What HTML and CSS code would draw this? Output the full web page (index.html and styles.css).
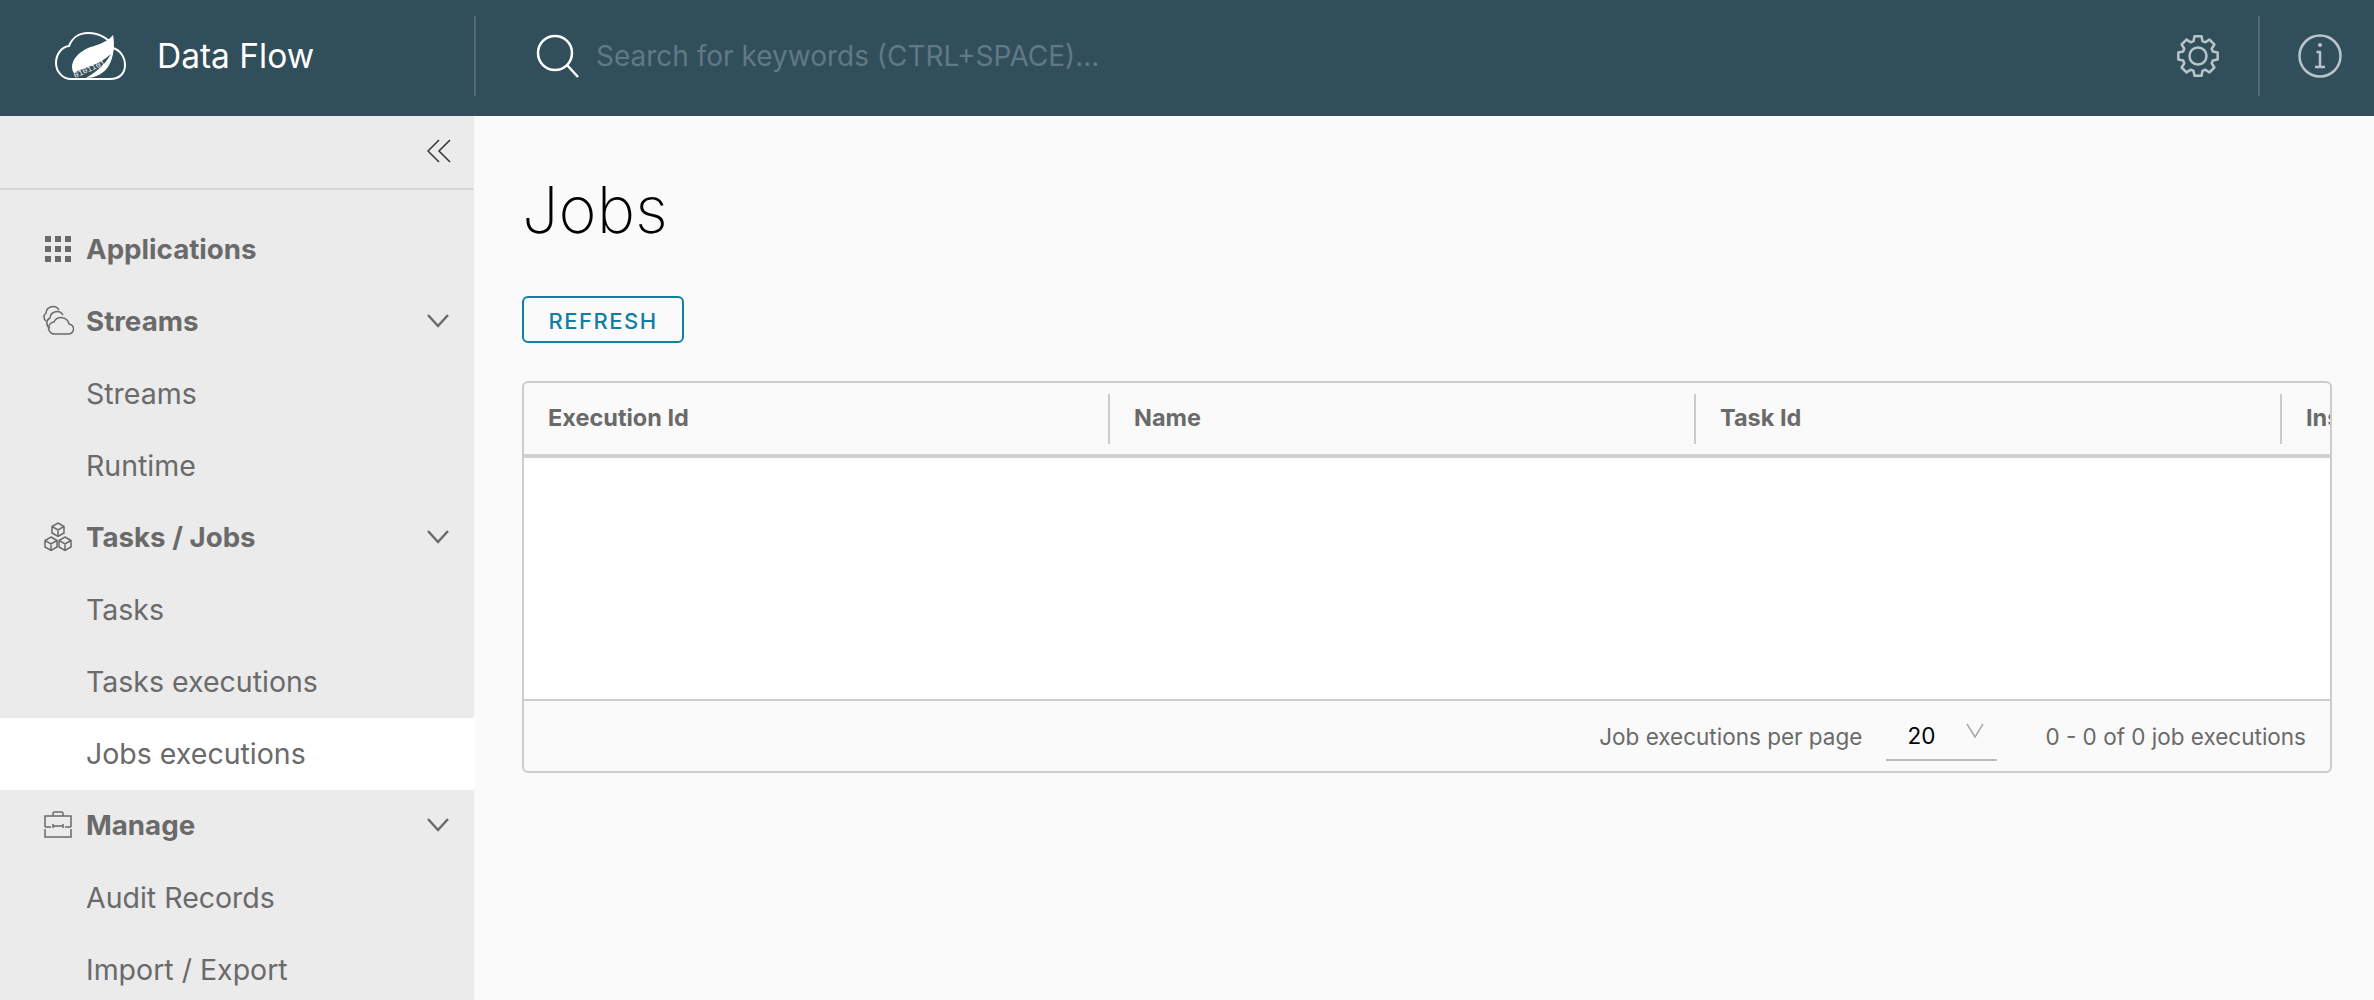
FILE: index.html
```html
<!DOCTYPE html>
<html lang="en">
<head>
    <meta charset="UTF-8">
    <meta name="viewport" content="width=device-width, initial-scale=1.0">
    <title>Data Flow</title>
    <link rel="stylesheet" href="styles.css">
</head>
<body>
    <header class="topbar">
        <div class="brand">
            <svg class="brand-logo" width="72" height="48" viewBox="0 0 72 48">
                <path class="logo-cloud" d="M17 47H56C66 47 71 41 71 33C71 25 66 18 59 16C56 7 46 1 34 1C25 1 18 6 15 14C7 15 2 23 2 31C2 40 9 47 17 47Z"/>
                <path class="logo-leaf" d="M59 3C52 12 40 13 32 17C24 21 18 28 18 35C18 38 19 40 20 41C30 35 44 34 57 22C52 31 44 39 32 46C42 46 50 41 54 35C60 26 61 12 59 3Z"/>
                <text class="logo-bits" transform="translate(21 46) rotate(-24)">0101101</text>
            </svg>
            <span class="brand-name">Data Flow</span>
        </div>
        <div class="bar-divider"></div>
        <div class="search">
            <svg class="search-icon" width="44" height="44" viewBox="0 0 44 44">
                <circle cx="19" cy="19" r="17"/>
                <path d="M31 31L42 43"/>
            </svg>
            <span class="search-hint">Search for keywords (CTRL+SPACE)...</span>
        </div>
        <svg class="bar-icon gear-icon" width="44" height="44" viewBox="-22 -22 44 44">
            <polygon points="-4.5,-14.8 -3.5,-19.7 3.5,-19.7 4.5,-14.8 7.3,-13.7 11.5,-16.4 16.4,-11.5 13.7,-7.3 14.8,-4.5 19.7,-3.5 19.7,3.5 14.8,4.5 13.7,7.3 16.4,11.5 11.5,16.4 7.3,13.7 4.5,14.8 3.5,19.7 -3.5,19.7 -4.5,14.8 -7.3,13.7 -11.5,16.4 -16.4,11.5 -13.7,7.3 -14.8,4.5 -19.7,3.5 -19.7,-3.5 -14.8,-4.5 -13.7,-7.3 -16.4,-11.5 -11.5,-16.4 -7.3,-13.7"/>
            <circle r="8.5"/>
        </svg>
        <div class="bar-divider"></div>
        <svg class="bar-icon info-icon" width="44" height="44" viewBox="-22 -22 44 44">
            <circle r="20.5"/>
            <circle class="info-dot" cy="-11" r="2"/>
            <path d="M-3.5 -4H0V11M-5 11H5"/>
        </svg>
    </header>

    <div class="layout">
        <aside class="sidebar">
            <div class="collapse-row">
                <svg class="collapse-icon" width="24" height="24" viewBox="0 0 24 24">
                    <path d="M12 1L1 12L12 23M23 1L12 12L23 23"/>
                </svg>
            </div>
            <nav class="side-nav">
                <a class="nav-item nav-top" href="#">
                    <svg class="nav-icon" width="32" height="32" viewBox="0 0 32 32">
                        <g class="dots">
                            <rect x="3" y="3" width="6" height="6"/><rect x="13" y="3" width="6" height="6"/><rect x="23" y="3" width="6" height="6"/>
                            <rect x="3" y="13" width="6" height="6"/><rect x="13" y="13" width="6" height="6"/><rect x="23" y="13" width="6" height="6"/>
                            <rect x="3" y="23" width="6" height="6"/><rect x="13" y="23" width="6" height="6"/><rect x="23" y="23" width="6" height="6"/>
                        </g>
                    </svg>
                    Applications
                </a>
                <a class="nav-item nav-top" href="#">
                    <svg class="nav-icon" width="32" height="32" viewBox="0 0 32 32">
                        <path d="M13 29H26A5 5 0 0 0 27 19A8 8 0 0 0 12 17A6 6 0 0 0 13 29Z"/>
                        <path d="M8 23A5.5 5.5 0 0 1 8 13A7 7 0 0 1 21 10"/>
                        <path d="M4 16A5 5 0 0 1 4 8A7 7 0 0 1 17 5"/>
                    </svg>
                    Streams
                    <svg class="nav-chevron" width="24" height="16" viewBox="0 0 24 16"><path d="M2 2L12 13L22 2"/></svg>
                </a>
                <a class="nav-item" href="#">Streams</a>
                <a class="nav-item" href="#">Runtime</a>
                <a class="nav-item nav-top" href="#">
                    <svg class="nav-icon" width="32" height="32" viewBox="0 0 32 32">
                        <path d="M16 2L22 5.500V12L16 15.500L10 12V5.500ZM10 5.500L16 9L22 5.500M16 9V15.500"/>
                        <path d="M9 16L15 19.500V26L9 29.500L3 26V19.500ZM3 19.500L9 23L15 19.500M9 23V29.500"/>
                        <path d="M23 16L29 19.500V26L23 29.500L17 26V19.500ZM17 19.500L23 23L29 19.500M23 23V29.500"/>
                    </svg>
                    Tasks / Jobs
                    <svg class="nav-chevron" width="24" height="16" viewBox="0 0 24 16"><path d="M2 2L12 13L22 2"/></svg>
                </a>
                <a class="nav-item" href="#">Tasks</a>
                <a class="nav-item" href="#">Tasks executions</a>
                <a class="nav-item active" href="#">Jobs executions</a>
                <a class="nav-item nav-top" href="#">
                    <svg class="nav-icon" width="32" height="32" viewBox="0 0 32 32">
                        <path d="M11 7V4.500A1.500 1.500 0 0 1 12.500 3H19.500A1.500 1.500 0 0 1 21 4.500V7"/>
                        <path d="M3 18V7H29V18"/>
                        <path d="M3 18H9M23 18H29M3 20V28H29V20"/>
                        <path d="M11 15V19M21 15V19M11 17H21"/>
                    </svg>
                    Manage
                    <svg class="nav-chevron" width="24" height="16" viewBox="0 0 24 16"><path d="M2 2L12 13L22 2"/></svg>
                </a>
                <a class="nav-item" href="#">Audit Records</a>
                <a class="nav-item" href="#">Import / Export</a>
            </nav>
        </aside>

        <main class="content">
            <h1 class="page-title">Jobs</h1>
            <button class="btn-outline" type="button">REFRESH</button>
            <div class="datagrid">
                <div class="grid-head">
                    <div class="grid-col">Execution Id</div>
                    <div class="grid-col">Name</div>
                    <div class="grid-col">Task Id</div>
                    <div class="grid-col">Instance Id</div>
                </div>
                <div class="grid-body"></div>
                <div class="grid-foot">
                    <span>Job executions per page</span>
                    <div class="page-size">
                        <span class="page-size-value">20</span>
                        <svg class="page-size-arrow" width="18" height="16" viewBox="0 0 18 16"><path d="M1 1L9 14L17 1"/></svg>
                    </div>
                    <span>0 - 0 of 0 job executions</span>
                </div>
            </div>
        </main>
    </div>
</body>
</html>
```

FILE: styles.css
```css
* {
    box-sizing: border-box;
}
html, body {
    height: 100%;
}
body {
    margin: 0;
    overflow: hidden;
    font-family: Inter, "Open Sans", sans-serif;
    background-color: #fafafa;
    color: #6a6a6a;
}
svg {
    fill: none;
    flex: none;
}

/* top bar */
.topbar {
    display: flex;
    align-items: center;
    height: 116px;
    padding-bottom: 4px;
    background-color: #314e5b;
}
.brand {
    display: flex;
    align-items: center;
    width: 474px;
    padding-left: 54px;
}
.logo-cloud {
    stroke: #fff;
    stroke-width: 2;
}
.logo-leaf {
    fill: #fff;
}
.logo-bits {
    fill: #fff;
    font-family: "Liberation Mono", monospace;
    font-size: 8px;
}
.brand-name {
    margin-left: 31px;
    font-size: 33.5px;
    white-space: nowrap;
    color: #fff;
}
.bar-divider {
    width: 2px;
    height: 80px;
    background-color: #4f6a76;
}
.search {
    display: flex;
    align-items: center;
    flex: 1;
    padding-left: 60px;
}
.search-icon {
    stroke: #fff;
    stroke-width: 2.500;
}
.search-hint {
    margin-left: 16px;
    font-size: 28px;
    white-space: nowrap;
    color: #617985;
}
.bar-icon {
    stroke: #b8c4c9;
    stroke-width: 2.500;
    stroke-linejoin: round;
}
.gear-icon {
    margin-right: 38px;
}
.info-icon {
    margin: 0 32px 0 38px;
}
.info-dot {
    fill: #b8c4c9;
    stroke: none;
}

/* sidebar */
.layout {
    display: flex;
    height: calc(100% - 116px);
}
.sidebar {
    width: 474px;
    flex: none;
    overflow: hidden;
    background-color: #ebebeb;
}
.collapse-row {
    display: flex;
    align-items: center;
    justify-content: flex-end;
    height: 74px;
    padding-right: 23px;
    border-bottom: 2px solid #d7d7d7;
    margin-bottom: 24px;
}
.collapse-icon {
    stroke: #333;
    stroke-width: 1.500;
    margin-top: -2px;
}
.nav-item {
    display: flex;
    align-items: center;
    height: 72px;
    padding: 0 24px 2px 86px;
    font-size: 28.500px;
    color: #6a6a6a;
    text-decoration: none;
}
.nav-top {
    padding-left: 42px;
    font-size: 27.700px;
    font-weight: 700;
}
.nav-icon {
    margin-right: 12px;
    stroke: #6a6a6a;
    stroke-width: 1.500;
}
.dots {
    fill: #6a6a6a;
    stroke: none;
}
.nav-chevron {
    margin-left: auto;
    stroke: #6a6a6a;
    stroke-width: 2.500;
}
.active {
    background-color: #fff;
}

/* page content */
.content {
    flex: 1;
    min-width: 0;
    padding: 0 42px 0 48px;
}
.page-title {
    margin: 54px 0 46px;
    font-size: 65px;
    font-weight: 250;
    line-height: 80px;
    color: #000;
}
.btn-outline {
    display: block;
    width: 162px;
    height: 47px;
    padding: 2px 0 0;
    background: transparent;
    border: 2px solid #0f7fa3;
    border-radius: 6px;
    font-family: inherit;
    font-size: 22px;
    font-weight: 500;
    letter-spacing: 1.500px;
    color: #0f7fa3;
}

/* datagrid */
.datagrid {
    margin-top: 38px;
    border: 2px solid #ccc;
    border-radius: 6px;
    overflow: hidden;
}
.grid-head {
    display: flex;
    padding: 11px 0 10px;
    border-bottom: 4px solid #d0d0d0;
    overflow: hidden;
}
.grid-col {
    display: flex;
    align-items: center;
    flex: 0 0 586px;
    height: 50px;
    padding: 0 0 3px 24px;
    border-right: 2px solid #ccc;
    font-size: 23.500px;
    font-weight: 700;
    white-space: nowrap;
}
.grid-body {
    height: 241px;
    background-color: #fff;
}
.grid-foot {
    display: flex;
    align-items: center;
    justify-content: flex-end;
    height: 72px;
    padding-right: 24px;
    border-top: 2px solid #ccc;
    font-size: 22.500px;
}
.page-size {
    display: flex;
    align-items: center;
    width: 111px;
    height: 50px;
    margin: 0 48px 0 24px;
    padding-left: 21px;
    border-bottom: 2px solid #bbb;
}
.page-size-value {
    color: #000;
}
.page-size-arrow {
    margin: -8px 0 0 31px;
    stroke: #aaa;
    stroke-width: 1.500;
}
```
